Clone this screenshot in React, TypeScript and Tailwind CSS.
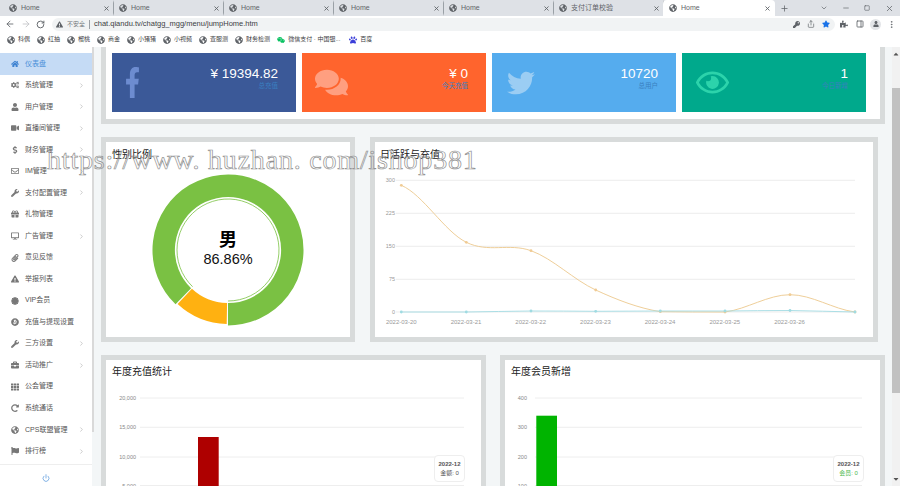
import { ReactNode } from "react";
import { ArrowLeft, ArrowRight, ChevronDown, ChevronRight, EllipsisVertical, Minus, PanelRight, Plus, Power, RotateCw, Share, Square, X } from "lucide-react";
import {
  FaBitcoin, FaBriefcase, FaCaretDown, FaCaretUp, FaCertificate, FaCogs, FaComments, FaDesktop, FaDollarSign, FaExclamationTriangle, FaFacebookF,
  FaFlag, FaGift, FaGlobeAmericas, FaHome, FaKey, FaPaperclip, FaPaw, FaPuzzlePiece, FaRedoAlt, FaRegEnvelope, FaRegEye,
  FaStar, FaTh, FaTwitter, FaUser, FaVideo, FaWeixin, FaWrench,
} from "react-icons/fa";

const sans = "font-['Liberation_Sans','Noto_Sans_CJK_SC',sans-serif]";

const tabs = ["Home", "Home", "Home", "Home", "Home", "支付订单校验"];

const bookmarks = ["科偶", "红抽", "榴桃", "商金", "小猪猪", "小视频", "查服测", "财务检测"];

const menu: { label: string; icon: ReactNode; more?: boolean; active?: boolean }[] = [
  { label: "仪表盘", icon: <FaHome />, active: true },
  { label: "系统管理", icon: <FaCogs />, more: true },
  { label: "用户管理", icon: <FaUser />, more: true },
  { label: "直播间管理", icon: <FaVideo />, more: true },
  { label: "财务管理", icon: <FaDollarSign />, more: true },
  { label: "IM管理", icon: <FaRegEnvelope />, more: true },
  { label: "支付配置管理", icon: <FaWrench />, more: true },
  { label: "礼物管理", icon: <FaGift /> },
  { label: "广告管理", icon: <FaDesktop />, more: true },
  { label: "意见反馈", icon: <FaPaperclip /> },
  { label: "举报列表", icon: <FaExclamationTriangle /> },
  { label: "VIP会员", icon: <FaCertificate /> },
  { label: "充值与提现设置", icon: <FaBitcoin /> },
  { label: "三方设置", icon: <FaWrench />, more: true },
  { label: "活动推广", icon: <FaBriefcase />, more: true },
  { label: "公会管理", icon: <FaTh /> },
  { label: "系统通话", icon: <FaRedoAlt /> },
  { label: "CPS联盟管理", icon: <FaGlobeAmericas />, more: true },
  { label: "排行榜", icon: <FaFlag />, more: true },
];

const stats = [
  { value: "¥ 19394.82", label: "总充值", bg: "bg-[#3b5998]", icon: <FaFacebookF preserveAspectRatio="none" className="ml-[13px] h-[31px] w-[15px] text-[#6d8cd0]" /> },
  { value: "¥ 0", label: "今天充值", bg: "bg-[#ff642d]", icon: <FaComments className="ml-[13px] text-[33px] text-[#ff9f80]" /> },
  { value: "10720", label: "总用户", bg: "bg-[#55acee]", icon: <FaTwitter className="ml-[15px] text-[28px] text-[#9bcdf3]" /> },
  { value: "1", label: "今日新增", bg: "bg-[#00a98c]", icon: <FaRegEye className="ml-[14px] text-[33px] text-[#2cd3ab]" /> },
];

const orange: [number, number][] = [[401.3, 184.3], [466.3, 241.3], [531, 249.7], [595.7, 289], [660.3, 310.7], [725, 311], [790, 293.7], [855, 311]];
const blue: [number, number][] = [[401.3, 311], [466.3, 311], [531, 310], [595.7, 310.3], [660.3, 310], [725, 310], [790, 309.5], [855, 311]];
const days = ["2022-03-20", "2022-03-21", "2022-03-22", "2022-03-23", "2022-03-24", "2022-03-25", "2022-03-26"];

function smooth(pts: [number, number][]) {
  let d = `M${pts[0][0]} ${pts[0][1]}`;
  for (let i = 0; i < pts.length - 1; i++) {
    const p0 = pts[Math.max(i - 1, 0)];
    const p1 = pts[i];
    const p2 = pts[i + 1];
    const p3 = pts[Math.min(i + 2, pts.length - 1)];
    const c1y = Math.min(p1[1] + (p2[1] - p0[1]) / 6, 311);
    const c2y = Math.min(p2[1] - (p3[1] - p1[1]) / 6, 311);
    d += ` C${p1[0] + 22} ${c1y} ${p2[0] - 22} ${c2y} ${p2[0]} ${p2[1]}`;
  }
  return d;
}

function arc(r: number, from: number, to: number) {
  // angles in degrees, clockwise from the bottom of the ring
  const pt = (a: number) => {
    const t = (a * Math.PI) / 180;
    return `${228 - r * Math.sin(t)} ${249 + r * Math.cos(t)}`;
  };
  return `M${pt(from)} A${r} ${r} 0 ${to - from > 180 ? 1 : 0} 1 ${pt(to)}`;
}

function Globe() {
  return <FaGlobeAmericas className="shrink-0 text-[8px] text-[#5f6368]" />;
}

function BrowserChrome() {
  return (
    <div className={`${sans} shrink-0`}>
      <div className="flex h-[16px] items-center bg-[#dee1e6] pl-[4px] text-[7px] text-[#5f6368]">
        {tabs.map((t, i) => (
          <div key={i} className="flex h-[16px] w-[110px] items-center gap-[4px] border-r border-[#9aa0a6] border-y-[3px] border-y-[#dee1e6] pl-[5px] pr-[3px]">
            <Globe />
            <span className="flex-1 truncate">{t}</span>
            <X size={7} strokeWidth={3} />
          </div>
        ))}
        <div className="ml-[-1px] flex h-[16px] w-[112px] items-center gap-[4px] rounded-t-[4px] bg-white pl-[6px] pr-[4px]">
          <Globe />
          <span className="flex-1">Home</span>
          <X size={7} strokeWidth={3} />
        </div>
        <Plus size={9} strokeWidth={2} className="ml-[5px]" />
        <ChevronDown size={8} className="ml-[31px]" />
        <Minus size={8} className="ml-[14px]" />
        <Square size={6} strokeWidth={2.5} className="ml-[14px]" />
        <X size={9} className="ml-[15px]" />
      </div>
      <div className="flex h-[16px] items-center bg-white text-[#5f6368]">
        <ArrowLeft size={10} className="ml-[5px]" />
        <ArrowRight size={10} className="ml-[6px] text-[#c0c2c5]" />
        <RotateCw size={9} className="ml-[5px]" strokeWidth={2.5} />
        <div className="ml-[7px] flex h-[13px] w-[783px] items-center rounded-full bg-[#f1f3f4] pl-[4px] text-[7px]">
          <FaExclamationTriangle className="text-[7px] text-[#5f6368]" />
          <span className="ml-[4px] text-[6px] text-[#70757a]">不安全</span>
          <span className="ml-[4px] h-[9px] w-px bg-[#9aa0a6]" />
          <span className="ml-[4px] text-[7.5px] text-[#3c4043]">chat.qiandu.tv/chatgg_mgg/menu/jumpHome.htm</span>
          <FaKey className="ml-auto text-[7px]" />
          <Share size={8} className="ml-[7px]" />
          <FaStar className="ml-[7px] mr-[5px] text-[8px] text-[#1a73e8]" />
        </div>
        <FaPuzzlePiece className="ml-[5px] text-[8px]" />
        <PanelRight size={8} strokeWidth={2.5} className="ml-[8px]" />
        <span className="ml-[6px] flex h-[11px] w-[11px] items-center justify-center rounded-full bg-[#e3e5e8]">
          <FaUser className="text-[6px]" />
        </span>
        <EllipsisVertical size={9} className="ml-[6px]" />
      </div>
      <div className="flex h-[15px] items-center gap-[7px] bg-white pl-[7px] text-[6px] text-[#3c4043]">
        {bookmarks.map((b) => (
          <div key={b} className="flex items-center gap-[3px]">
            <Globe />
            <span>{b}</span>
          </div>
        ))}
        <div className="flex items-center gap-[3px]">
          <FaWeixin className="text-[8px] text-[#07c160]" />
          <span className="w-[54px] truncate">微信支付 · 中国银...</span>
        </div>
        <div className="flex items-center gap-[3px]">
          <FaPaw className="text-[8px] text-[#3b3fd9]" />
          <span>百度</span>
        </div>
      </div>
    </div>
  );
}

function Sidebar() {
  return (
    <aside className={`${sans} flex w-[92px] shrink-0 flex-col bg-white`}>
      <nav className="flex-1 pt-[6px]">
        {menu.map((m) => (
          <div key={m.label} className={`flex h-[21.54px] items-center text-[7px] ${m.active ? "bg-[#c5dbf5] text-[#4a90d9]" : "text-[#555]"}`}>
            <span className={`flex w-[25px] justify-center pl-[5px] text-[8px] ${m.active ? "text-[#3f83d1]" : "text-[#777]"}`}>{m.icon}</span>
            <span className="flex-1 whitespace-nowrap">{m.label}</span>
            {m.more && <ChevronRight size={7} className="mr-[7px] text-[#aaa]" />}
          </div>
        ))}
      </nav>
      <div className="flex h-[22px] items-center justify-center border-t border-[#eee]">
        <Power size={8} className="mt-[5px] text-[#4a90d9]" />
      </div>
    </aside>
  );
}

function StatCards() {
  return (
    <div className="flex gap-[6px] border-x-[5px] border-b-[5px] border-[#d8dbdb] bg-white pb-[7px] pl-[6px] pt-[6px]">
      {stats.map((s) => (
        <div key={s.label} className={`${s.bg} flex h-[59px] w-[184px] items-center justify-between`}>
          {s.icon}
          <div className="self-start pr-[18px] pt-[13px] text-right">
            <div className="text-[13.5px] leading-[16px] text-white">{s.value}</div>
            <div className="text-[6.5px] leading-[8px] text-[#3a7fc0]">{s.label}</div>
          </div>
        </div>
      ))}
    </div>
  );
}

function GenderCard() {
  return (
    <section className="relative h-[205px] w-[254px] border-[5px] border-[#d8dbdb] bg-white">
      <h3 className="pl-[6px] pt-[6px] text-[10px] font-normal leading-[14px] text-[#222]">性别比例</h3>
      <svg viewBox="106 165 244 168" className="mt-[4px] block h-[168px] w-[244px]">
        <path d={arc(64.3, 0, 316)} transform="scale(-1 1) translate(-456 0)" fill="none" stroke="#7ac143" strokeWidth="22.4" />
        <path d={arc(63.4, 1, 43)} fill="none" stroke="#ffb111" strokeWidth="21" />
        <path d={arc(51, 0, 316)} transform="scale(-1 1) translate(-456 0)" fill="none" stroke="#7ac143" strokeWidth="0.8" />
      </svg>
      <div className="absolute left-[117px] top-[87px] flex w-[10px] flex-col items-center">
        <span className="whitespace-nowrap text-[18px] font-bold leading-[22px] text-black">男</span>
        <span className="whitespace-nowrap text-[14.5px] leading-[17px] text-[#111]">86.86%</span>
      </div>
    </section>
  );
}

function ActivityCard() {
  return (
    <section className="h-[205px] w-[508px] border-[5px] border-[#d8dbdb] bg-white">
      <h3 className="pl-[5px] pt-[6px] text-[10px] font-normal leading-[14px] text-[#222]">日活跃与充值</h3>
      <svg viewBox="375 168 498 165" className="mt-[7px] block h-[165px] w-[498px]">
        {[[179.3, "300"], [212.3, "225"], [245.3, "150"], [278.3, "75"], [311, "0"]].map(([y, t]) => (
          <g key={t as string}>
            <line x1="396" x2="855" y1={y} y2={y} stroke="#e4e4e4" strokeWidth="0.7" />
            <text x="395" y={(y as number) + 2} textAnchor="end" fontSize="5.5" fill="#999">{t}</text>
          </g>
        ))}
        {days.map((d, i) => (
          <text key={d} x={401.3 + i * 64.7} y="323" textAnchor="middle" fontSize="6" fill="#999">{d}</text>
        ))}
        <path d={smooth(orange)} fill="none" stroke="#ecc88d" strokeWidth="0.9" />
        <path d={smooth(blue)} fill="none" stroke="#a3dbe3" strokeWidth="0.9" />
        {orange.map(([x, y]) => <circle key={x} cx={x} cy={y} r="1.4" fill="#f0cb94" />)}
        {blue.map(([x, y]) => <circle key={x} cx={x} cy={y} r="1.4" fill="#9fdbe2" />)}
      </svg>
    </section>
  );
}

function BarCard({ title, ticks, left, right, labelX, barX, barTop, fill, tip, tipColor, viewX }: {
  title: string; ticks: string[]; left: number; right: number; labelX: number; barX: number; barTop: number;
  fill: string; tip: string; tipColor: string; viewX: number;
}) {
  const rows = [398, 427.3, 457, 485.5];
  return (
    <section className="relative h-[140px] w-[385px] border-x-[5px] border-t-[5px] border-[#d8dbdb] bg-white">
      <h3 className="pl-[6px] pt-[5px] text-[10px] font-normal leading-[14px] text-[#222]">{title}</h3>
      <svg viewBox={`${viewX} 380 375 120`} className="mt-[1px] block h-[120px] w-[375px]">
        {rows.map((y, i) => (
          <g key={y}>
            <line x1={left} x2={right} y1={y} y2={y} stroke="#eaeaea" strokeWidth="0.8" />
            <text x={labelX} y={y + 2} textAnchor="end" fontSize="5.5" fill="#888">{ticks[i]}</text>
          </g>
        ))}
        <rect x={barX} y={barTop} width="20.7" height={500 - barTop} fill={fill} />
      </svg>
      <div className="absolute left-[328px] top-[95px] flex h-[27px] w-[31px] flex-col items-center justify-center rounded-[4px] border border-[#eee] bg-white text-[6px] leading-[9px]">
        <b className="text-[#555]">2022-12</b>
        <span className={tipColor}>{tip}</span>
      </div>
    </section>
  );
}

export default function App() {
  return (
    <div className={`${sans} relative flex h-[486px] w-[900px] flex-col overflow-hidden bg-[#f3f6f7]`}>
      <BrowserChrome />
      <div className="flex min-h-0 flex-1">
        <Sidebar />
        <div className="w-[2px] shrink-0">
          <div className="h-[385px] bg-[#d9d9d9]" />
        </div>
        <main className="flex min-w-0 flex-1 flex-col gap-[13px] px-[7px]">
          <StatCards />
          <div className="flex gap-[15px]">
            <GenderCard />
            <ActivityCard />
          </div>
          <div className="flex gap-[14px]">
            <BarCard title="年度充值统计" ticks={["20,000", "15,000", "10,000", "5,000"]} viewX={106} left={140} right={464} labelX={136} barX={198} barTop={437} fill="#ae0000" tip="金额: 0" tipColor="text-[#555]" />
            <BarCard title="年度会员新增" ticks={["400", "300", "200", "100"]} viewX={505} left={535} right={862} labelX={527} barX={536.3} barTop={415.7} fill="#00b400" tip="会员: 0" tipColor="text-[#4cb84c]" />
          </div>
        </main>
        <div className="relative flex w-[8px] shrink-0 flex-col items-center justify-between bg-[#f1f1f1] py-[3px] text-[8px] text-[#555]">
          <FaCaretUp />
          <div className="absolute left-0 top-[41px] h-[305px] w-[8px] bg-[#c1c1c1]" />
          <FaCaretDown />
        </div>
      </div>
      <div className="pointer-events-none absolute left-[47px] top-[145px] whitespace-nowrap font-['Liberation_Serif',serif] text-[28px] leading-[30px] tracking-[0.8px] text-transparent [-webkit-text-stroke:0.7px_#8f8f8f]">
        https://www. huzhan. com/ishop381
      </div>
    </div>
  );
}
